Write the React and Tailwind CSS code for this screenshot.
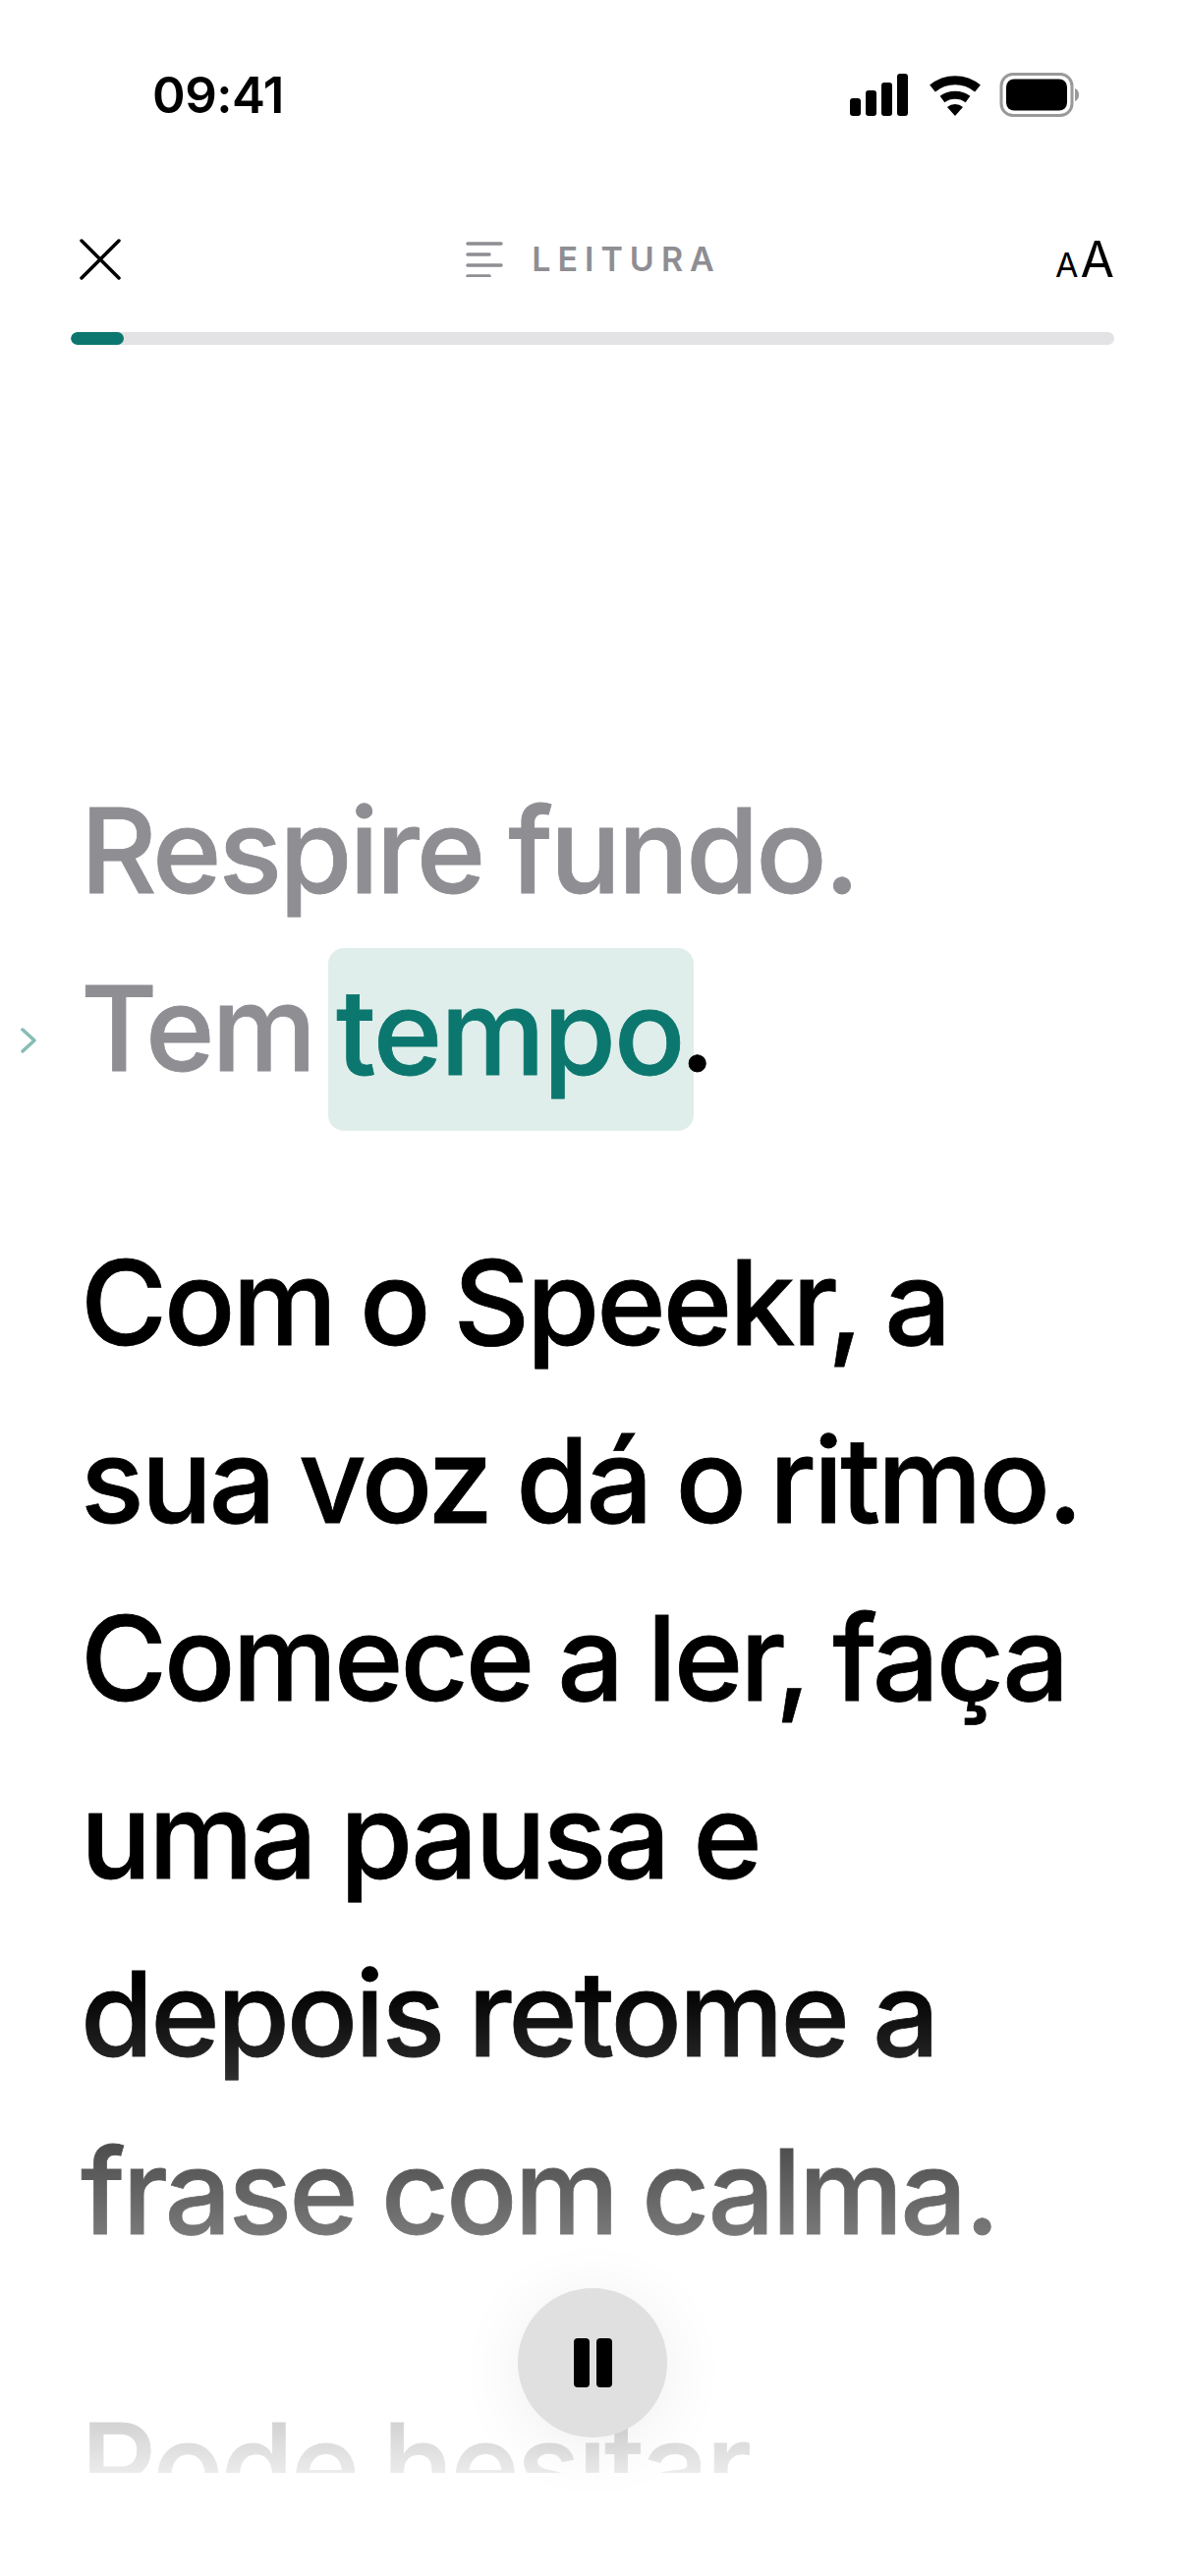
import React from 'react';

const lineCls = "h-[181px] leading-[181px] whitespace-nowrap";

function StatusIcons() {
  return (
    <svg width="236" height="46" viewBox="0 0 236 46" fill="none">
      {/* signal */}
      <rect x="0" y="26" width="11" height="18" rx="3" fill="#000" />
      <rect x="16" y="18" width="11" height="26" rx="3" fill="#000" />
      <rect x="32" y="10" width="11" height="34" rx="3" fill="#000" />
      <rect x="48" y="1" width="11" height="43" rx="3" fill="#000" />
      {/* wifi */}
      <path d="M84 16 A36 36 0 0 1 130 16" stroke="#000" strokeWidth="9" fill="none" />
      <path d="M94 27 A22 22 0 0 1 120 27" stroke="#000" strokeWidth="8" fill="none" />
      <path d="M99 35 L107 44 L115 35 A12 12 0 0 0 99 35 Z" fill="#000" />
      {/* battery */}
      <rect x="154" y="1.5" width="72" height="42" rx="12" stroke="#999" strokeWidth="3" />
      <rect x="159" y="6.5" width="62" height="32" rx="8" fill="#000" />
      <path d="M229 16 C232 17 233 20 233 22.5 C233 25 232 28 229 29 Z" fill="#999" />
    </svg>
  );
}

export default function App() {
  return (
    <main className="relative w-full h-[2622px] overflow-hidden bg-white font-['Inter',sans-serif] text-black">
      {/* status bar */}
      <div className="flex items-center justify-between pl-[155px] pr-[105px] pt-[68px] h-[126px]">
        <span className="text-[51px] leading-[58px] font-semibold tracking-[-0.5px]">09:41</span>
        <StatusIcons />
      </div>

      {/* top bar */}
      <div className="flex items-center justify-between pl-[80px] pr-[72px] mt-[108px] h-[60px]">
        <svg width="44" height="44" viewBox="0 0 44 44" fill="none" stroke="#000" strokeWidth="3.5" strokeLinecap="round">
          <path d="M3 3 L41 41 M41 3 L3 41" />
        </svg>
        <div className="flex items-center gap-[29px] ml-[10px] text-[#8e8e93]">
          <svg width="38" height="36" viewBox="0 0 38 36" fill="none" stroke="#8e8e93" strokeWidth="3.5" strokeLinecap="round">
            <path d="M2 2 H36 M2 13 H24 M2 24 H36 M2 35 H24" />
          </svg>
          <span className="text-[34px] leading-none font-semibold tracking-[7px]">LEITURA</span>
        </div>
        <div className="flex items-baseline text-black font-normal leading-none">
          <span className="text-[34px] mr-[2px]">A</span>
          <span className="text-[50px]">A</span>
        </div>
      </div>

      {/* progress */}
      <div className="mx-[72px] mt-[44px] h-[13px] rounded-full bg-[#e3e3e5] overflow-hidden">
        <div className="h-full w-[54px] rounded-full bg-[#0c776e]" />
      </div>

      {/* reading text */}
      <div className="absolute left-0 right-0 top-0 h-[2517px] overflow-hidden pt-[775px] pl-[82px] text-[120px] font-medium tracking-[-3px] [word-spacing:-3px] [-webkit-text-stroke:0.8px] [mask-image:linear-gradient(to_bottom,#000_0,#000_2020px,#00000014_2517px)]">
        <div className="text-[#8e8e93]">
          <div className={lineCls}>Respire fundo.</div>
          <div className={lineCls}>
            Tem <span className="inline-block h-[186px] leading-[171px] align-top mt-[9px] -ml-[11px] -mr-[15px] pl-[8px] pr-[11px] rounded-[16px] bg-[#e0eeeb] text-[#0c776e] tracking-[-2px]">tempo</span><span className="relative text-black">.</span>
          </div>
        </div>
        <div className="mt-[98px]">
          <div className={lineCls}>Com o Speekr, a</div>
          <div className={lineCls}>sua voz dá o ritmo.</div>
          <div className={lineCls}>Comece a ler, faça</div>
          <div className={lineCls}>uma pausa e</div>
          <div className={lineCls}>depois retome a</div>
          <div className={lineCls}>frase com calma.</div>
        </div>
        <div className="mt-[98px]">
          <div className={lineCls}>Pode hesitar</div>
        </div>
      </div>

      {/* current line marker */}
      <svg className="absolute left-[21px] top-[1046px]" width="16" height="26" viewBox="0 0 16 26" fill="none" stroke="#86bdb5" strokeWidth="3.5" strokeLinecap="round" strokeLinejoin="round">
        <path d="M2 2 L14 13 L2 24" />
      </svg>

      {/* pause */}
      <button className="absolute left-[527px] top-[2329px] w-[152px] h-[152px] rounded-full bg-[#e0e0e0] flex items-center justify-center gap-[7px] shadow-[0_8px_70px_rgba(0,0,0,0.07)]">
        <span className="w-[16px] h-[50px] rounded-[4px] bg-black" />
        <span className="w-[16px] h-[50px] rounded-[4px] bg-black" />
      </button>
    </main>
  );
}
